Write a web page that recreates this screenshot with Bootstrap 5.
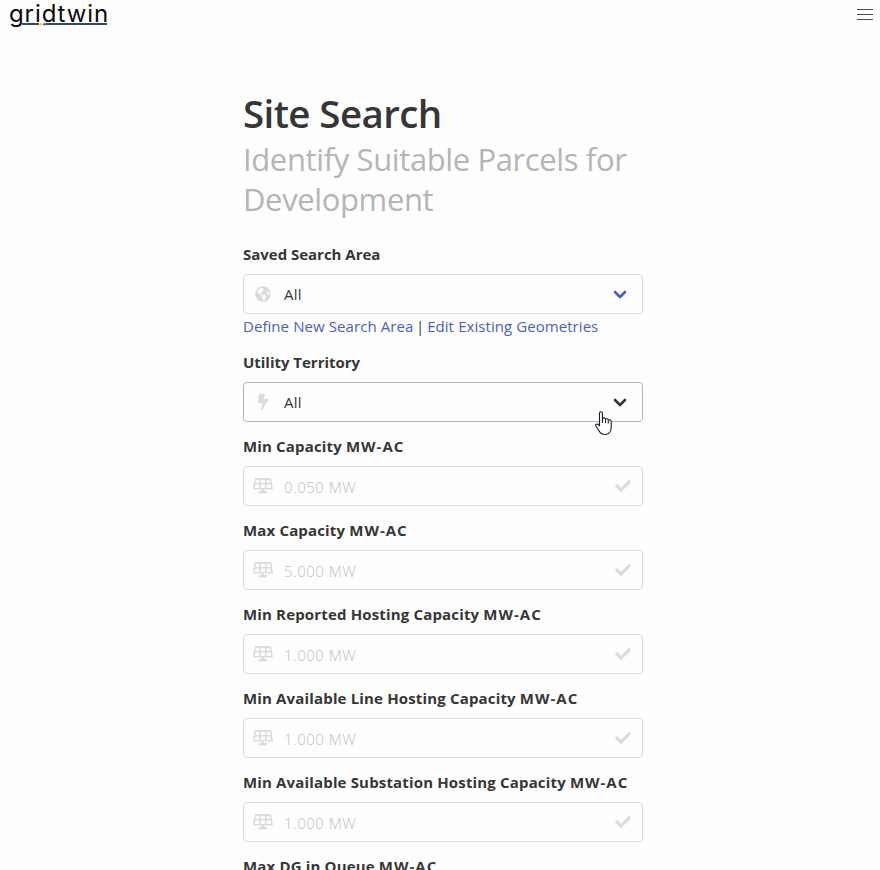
<!DOCTYPE html>
<html lang="en">
<head>
<meta charset="utf-8">
<meta name="viewport" content="width=device-width, initial-scale=1">
<title>gridtwin – Site Search</title>
<link href="https://cdn.jsdelivr.net/npm/bootstrap@5.3.0/dist/css/bootstrap.min.css" rel="stylesheet">
<style>
body{background:#fefefe;color:#363636;font-family:"Open Sans","Noto Sans",sans-serif;font-size:16px;line-height:24px;height:870px;overflow:hidden}
.topbar{height:30px;padding:0 7px 0 9px}
.brand{color:#0a0a0a;font:400 24px/28px "Inter",sans-serif;letter-spacing:.9px;height:30px}
.brand-line{left:13px;top:23px}
.search-col{width:400px;margin-left:243px;padding-top:61px}
.page-title{font-size:38.5px;font-weight:600;line-height:45px;letter-spacing:-.6px;margin:0 0 3px;white-space:nowrap}
.page-sub{color:#b5b5b5;font-size:31px;font-weight:400;line-height:40px;letter-spacing:-.38px;margin:0 0 23px}
.field{margin-bottom:12px}
.field-label{display:block;height:24px;margin-bottom:8px;font-size:15px;font-weight:700;letter-spacing:.16px;white-space:nowrap}
.field-label.snug{letter-spacing:-.02px}
.unit{letter-spacing:1px}
.control-box{height:40px;border:1px solid #dbdbdb;border-radius:4px;color:#363636;font-weight:400;font-size:15px}
.control-box.hovered{border-color:#b5b5b5}
.glyph{width:38px;color:#dbdbdb}
.value{padding-left:2px;letter-spacing:.3px}
.placeholder-text{color:#c0c0c0;font-weight:300;letter-spacing:.5px;padding:2px 0 0 2px}
.chev{width:44px;color:#485fc7}
.hovered .chev{color:#363636}
.links{height:24px;font-size:15px;letter-spacing:.05px;word-spacing:-1.2px;white-space:nowrap}
.links a{color:#485fc7;text-decoration:none;word-spacing:.2px}
.pointer{left:351px;top:28px;z-index:2}
</style>
<script src="https://cdn.jsdelivr.net/npm/bootstrap@5.3.0/dist/js/bootstrap.bundle.min.js"></script>
</head>
<body>
<svg class="d-none">
  <symbol id="globe" viewBox="0 0 496 512"><path fill="currentColor" d="M248 8C111.03 8 0 119.03 0 256s111.03 248 248 248 248-111.03 248-248S384.97 8 248 8zm82.29 357.6c-3.9 3.88-7.99 7.95-11.31 11.28-2.99 3-5.1 6.7-6.17 10.71-1.51 5.66-2.73 11.38-4.77 16.87l-17.39 46.85c-13.76 3-28 4.69-42.65 4.69v-27.38c1.69-12.62-7.64-36.26-22.63-51.25-6-6-9.37-14.14-9.37-22.63v-32.01c0-11.64-6.27-22.34-16.46-27.97-14.37-7.95-34.81-19.06-48.81-26.11-11.48-5.78-22.1-13.14-31.65-21.75l-.8-.72a114.792 114.792 0 0 1-18.06-20.74c-9.38-13.77-24.66-36.42-34.59-51.14 20.47-45.5 57.36-82.04 103.2-101.89l24.01 12.01C203.48 89.74 216 82.01 216 70.11v-11.3c7.99-1.29 16.12-2.11 24.39-2.42l28.3 28.3c6.25 6.25 6.25 16.38 0 22.63L264 112l-10.34 10.34c-3.12 3.12-3.12 8.19 0 11.31l4.69 4.69c3.12 3.12 3.12 8.19 0 11.31l-8 8a8.008 8.008 0 0 1-5.66 2.34h-8.99c-2.08 0-4.08.81-5.58 2.27l-9.92 9.65a8.008 8.008 0 0 0-1.58 9.31l15.59 31.19c2.66 5.32-1.21 11.58-7.15 11.58h-5.64c-1.93 0-3.79-.7-5.24-1.96l-9.28-8.06a16.017 16.017 0 0 0-15.55-3.1l-31.17 10.39a11.95 11.95 0 0 0-8.17 11.34c0 4.53 2.56 8.66 6.61 10.69l11.08 5.54c9.41 4.71 19.79 7.16 30.31 7.16s22.59 27.29 32 32h66.75c8.49 0 16.62 3.37 22.63 9.37l13.69 13.69a30.503 30.503 0 0 1 8.93 21.57 46.536 46.536 0 0 1-13.72 32.98zM417 274.25c-5.79-1.45-10.84-5-14.15-9.97l-17.98-26.97a23.97 23.97 0 0 1 0-26.62l19.59-29.38c2.32-3.47 5.5-6.29 9.24-8.15l12.98-6.49C440.2 193.59 448 223.87 448 256c0 8.67-.74 17.16-1.82 25.54L417 274.25z"/></symbol>
  <symbol id="bolt" viewBox="0 0 320 512"><path fill="currentColor" d="M296 160H180.6l42.6-129.8C227.2 15 215.7 0 200 0H56C44 0 33.8 8.9 32.2 20.8l-32 240C-1.7 275.2 9.5 288 24 288h118.7L96.6 482.5c-3.6 15.2 8 29.5 23.3 29.5 8.4 0 16.4-4.4 20.8-12l176-304c9.3-15.9-2.2-36-20.7-36z"/></symbol>
  <symbol id="solar" viewBox="0 0 20 16"><path fill="none" stroke="currentColor" stroke-width="1.6" stroke-linejoin="round" d="M2.6.9h14.8l1.7 9.8H.9zM1.6 5.7h16.800M7.4.9l-.5 9.800M12.600.9l.5 9.800"/><path fill="currentColor" d="M8.800 11.500h2.400V13H13c1.500 0 1.500 2.500 0 2.500H7C5.500 15.500 5.500 13 7 13h1.800z"/></symbol>
  <symbol id="check" viewBox="0 0 512 512"><path fill="currentColor" d="M173.898 439.404l-166.4-166.4c-9.997-9.997-9.997-26.206 0-36.204l36.203-36.204c9.997-9.998 26.207-9.998 36.204 0L192 312.69 432.095 72.596c9.997-9.997 26.207-9.997 36.204 0l36.203 36.204c9.997 9.997 9.997 26.206 0 36.204l-294.4 294.401c-9.998 9.997-26.207 9.997-36.204-.001z"/></symbol>
  <symbol id="chevron" viewBox="0 0 14 9"><path fill="none" stroke="currentColor" stroke-width="2.6" stroke-linecap="round" stroke-linejoin="round" d="M2 2l5 5 5-5"/></symbol>
</svg>

<nav class="topbar d-flex justify-content-between align-items-center">
  <div class="brand position-relative">gridtwin
    <svg class="brand-line position-absolute" width="85" height="3"><path fill="#2a4d69" d="M0 0h17v2H0zM24 0h61v2H24z"/><circle cx="19" cy="1.300" r="1.300" fill="#f5c518"/><circle cx="22.500" cy="1.300" r="1.200" fill="#2a5d84"/></svg>
  </div>
  <svg width="16" height="12" role="img" aria-label="Menu"><path fill="#4a4a4a" d="M0 0h16v1H0zM0 5h16v1H0zM0 10h16v1H0z"/></svg>
</nav>

<main class="search-col">
  <h1 class="page-title">Site Search</h1>
  <h2 class="page-sub">Identify Suitable Parcels for Development</h2>

  <div class="field">
    <label class="field-label snug">Saved Search Area</label>
    <div class="control-box d-flex align-items-center">
      <span class="glyph d-flex justify-content-center"><svg width="16" height="16"><use href="#globe"/></svg></span>
      <span class="value flex-grow-1">All</span>
      <span class="chev d-flex justify-content-center"><svg width="14" height="9"><use href="#chevron"/></svg></span>
    </div>
    <div class="links"><a href="#">Define New Search Area</a> | <a href="#">Edit Existing Geometries</a></div>
  </div>

  <div class="field">
    <label class="field-label snug">Utility Territory</label>
    <div class="control-box hovered d-flex align-items-center position-relative">
      <span class="glyph d-flex justify-content-center"><svg width="16" height="16"><use href="#bolt"/></svg></span>
      <span class="value flex-grow-1">All</span>
      <span class="chev d-flex justify-content-center"><svg width="14" height="9"><use href="#chevron"/></svg></span>
      <svg class="pointer position-absolute" width="18" height="25" viewBox="0 0 18 25"><path fill="#fff" stroke="#1b1b2b" stroke-width="1.1" stroke-linejoin="round" d="M4.500 14.800V2.400c0-2.300 3-2.300 3 0v5.200c.6-1.200 2.800-.9 3 .7.7-1 2.600-.6 2.800.9.8-.7 2.900-.2 2.900 1.300v5.800c0 4.400-2.500 7.200-6.200 7.200-3.300 0-5-1.500-6.300-4.200L.8 14.800c-.8-1.600 1.300-2.400 2.500-1.300z"/><path stroke="#1b1b2b" stroke-width="1.1" fill="none" d="M7.500 7.500v4.500M10.500 8.500v3.500M13.300 9.500v3"/></svg>
    </div>
  </div>

  <div class="field">
    <label class="field-label">Min Capacity <span class="unit">MW-AC</span></label>
    <div class="control-box d-flex align-items-center">
      <span class="glyph d-flex justify-content-center"><svg width="20" height="16"><use href="#solar"/></svg></span>
      <span class="placeholder-text flex-grow-1">0.050 MW</span>
      <span class="glyph d-flex justify-content-center"><svg width="16" height="16"><use href="#check"/></svg></span>
    </div>
  </div>
  <div class="field">
    <label class="field-label">Max Capacity <span class="unit">MW-AC</span></label>
    <div class="control-box d-flex align-items-center">
      <span class="glyph d-flex justify-content-center"><svg width="20" height="16"><use href="#solar"/></svg></span>
      <span class="placeholder-text flex-grow-1">5.000 MW</span>
      <span class="glyph d-flex justify-content-center"><svg width="16" height="16"><use href="#check"/></svg></span>
    </div>
  </div>
  <div class="field">
    <label class="field-label">Min Reported Hosting Capacity <span class="unit">MW-AC</span></label>
    <div class="control-box d-flex align-items-center">
      <span class="glyph d-flex justify-content-center"><svg width="20" height="16"><use href="#solar"/></svg></span>
      <span class="placeholder-text flex-grow-1">1.000 MW</span>
      <span class="glyph d-flex justify-content-center"><svg width="16" height="16"><use href="#check"/></svg></span>
    </div>
  </div>
  <div class="field">
    <label class="field-label">Min Available Line Hosting Capacity <span class="unit">MW-AC</span></label>
    <div class="control-box d-flex align-items-center">
      <span class="glyph d-flex justify-content-center"><svg width="20" height="16"><use href="#solar"/></svg></span>
      <span class="placeholder-text flex-grow-1">1.000 MW</span>
      <span class="glyph d-flex justify-content-center"><svg width="16" height="16"><use href="#check"/></svg></span>
    </div>
  </div>
  <div class="field">
    <label class="field-label">Min Available Substation Hosting Capacity <span class="unit">MW-AC</span></label>
    <div class="control-box d-flex align-items-center">
      <span class="glyph d-flex justify-content-center"><svg width="20" height="16"><use href="#solar"/></svg></span>
      <span class="placeholder-text flex-grow-1">1.000 MW</span>
      <span class="glyph d-flex justify-content-center"><svg width="16" height="16"><use href="#check"/></svg></span>
    </div>
  </div>
  <div class="field">
    <label class="field-label">Max DG in Queue <span class="unit">MW-AC</span></label>
  </div>
</main>
</body>
</html>
